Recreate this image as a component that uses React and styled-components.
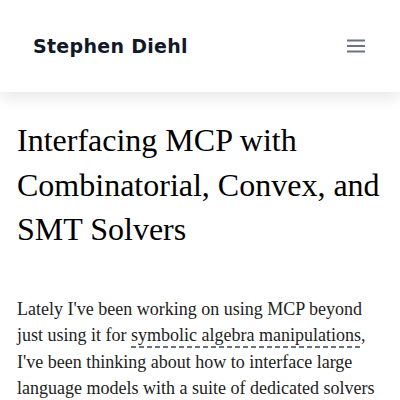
import React from 'react'
import styled, { createGlobalStyle } from 'styled-components'

const Global = createGlobalStyle`
	html, body {
		margin: 0;
		padding: 0;
		background: #fff;
	}
	* {
		box-sizing: border-box;
	}
`

const Page = styled.div`
	width: 100%;
	min-height: 400px;
	background: #fff;
	overflow: hidden;
`
const Header = styled.header`
	height: 92px;
	display: flex;
	align-items: center;
	justify-content: space-between;
	padding: 0 33px;
	background: #fff;
	box-shadow: 0 6px 14px rgba(0, 0, 0, 0.09);
	position: relative;
`
const Brand = styled.a`
	font-family: "DejaVu Sans", sans-serif;
	font-weight: 700;
	font-size: 19px;
	color: #111827;
	text-decoration: none;
	letter-spacing: 0.3px;
`
const MenuButton = styled.button`
	border: 0;
	background: none;
	padding: 0;
	margin-right: 1px;
	display: flex;
	color: #6b7280;
	cursor: pointer;
`
const Article = styled.article`
	padding: 26px 17px 0;
`
const Title = styled.h1`
	font-family: "Liberation Serif", serif;
	font-weight: 400;
	font-size: 32px;
	line-height: 44.5px;
	color: #000;
	margin: 0 0 44px;
`
const Paragraph = styled.p`
	font-family: "Liberation Serif", serif;
	font-size: 18px;
	line-height: 26.5px;
	color: #222;
	margin: 0;
`
const Link = styled.a`
	color: inherit;
	text-decoration: none;
	padding-bottom: 3px;
	background-image: repeating-linear-gradient(to right, #6b7280 0 5px, transparent 5px 8px);
	background-size: 100% 2px;
	background-position: 0 100%;
	background-repeat: no-repeat;
`

function Hamburger() {
	return (
		<svg width="20" height="16" viewBox="0 0 20 16">
			<rect x="1" y="1.5" width="18" height="2" fill="currentColor" />
			<rect x="1" y="7" width="18" height="2" fill="currentColor" />
			<rect x="1" y="12.5" width="18" height="2" fill="currentColor" />
		</svg>
	)
}

export default function App() {
	return (
		<Page>
			<Global />
			<Header>
				<Brand href="#">Stephen Diehl</Brand>
				<MenuButton aria-label="Menu"><Hamburger /></MenuButton>
			</Header>
			<Article>
				<Title>Interfacing MCP with Combinatorial, Convex, and SMT Solvers</Title>
				<Paragraph>
					Lately I've been working on using MCP beyond just using it for <Link href="#">symbolic algebra manipulations</Link>, I've been thinking about how to interface large language models with a suite of dedicated solvers for different problem domains.
				</Paragraph>
			</Article>
		</Page>
	)
}
